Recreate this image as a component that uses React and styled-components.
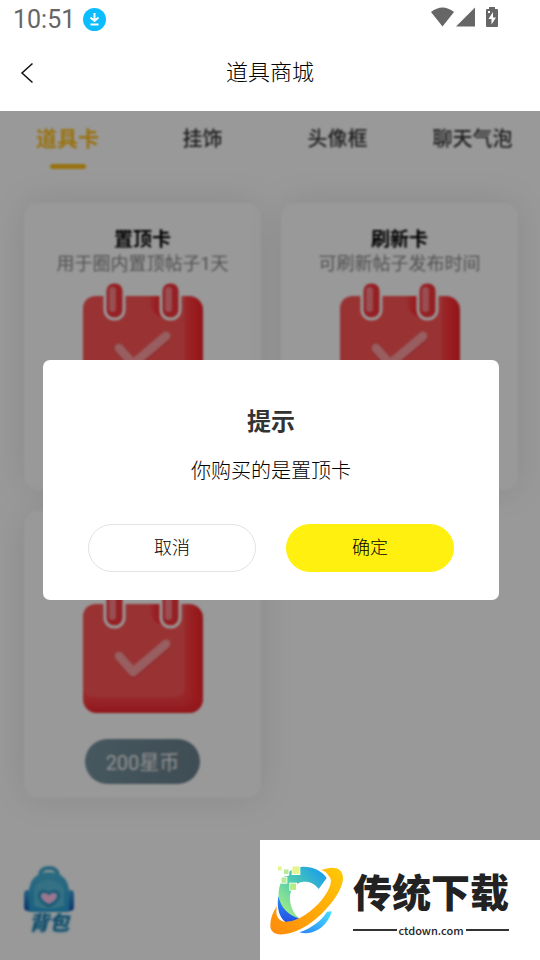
import React, { useState } from 'react';
import styled, { createGlobalStyle } from 'styled-components';

const tabs = ['道具卡', '挂饰', '头像框', '聊天气泡'];

const products = [
  { id: 1, name: '置顶卡', desc: '用于圈内置顶帖子1天' },
  { id: 2, name: '刷新卡', desc: '可刷新帖子发布时间' },
  { id: 3, price: '200星币' },
];

const CalendarIcon = () => (
  <svg width="120" height="123" viewBox="0 0 120 123" aria-hidden="true">
    <defs>
      <linearGradient id="calSide" x1="0" y1="0" x2="1" y2="0">
        <stop offset="0.82" stopColor="#ff4a4d" />
        <stop offset="0.93" stopColor="#ff2e33" />
        <stop offset="1" stopColor="#f0242c" />
      </linearGradient>
      <linearGradient id="calBottom" x1="0" y1="0" x2="0" y2="1">
        <stop offset="0.8" stopColor="#ff3338" stopOpacity="0" />
        <stop offset="1" stopColor="#f0242c" />
      </linearGradient>
      <linearGradient id="calShade" x1="0" y1="0" x2="1" y2="0">
        <stop offset="0" stopColor="#ff2e33" stopOpacity="0.1" />
        <stop offset="0.6" stopColor="#ff2e33" />
      </linearGradient>
    </defs>
    <rect y="13" width="120" height="109" rx="14" fill="url(#calSide)" />
    <rect y="13" width="120" height="109" rx="14" fill="url(#calBottom)" />
    <path d="M14 13H102V94Q102 106 90 106H12Q3 106 0 98V27Q0 13 14 13Z" fill="#ff5556" />
    <path d="M66 13H80V34Q66 32 66 13Z" fill="url(#calShade)" />
    {[23, 79].map((x) => (
      <g key={x}>
        <rect x={x - 1} y="-1" width="19" height="37" rx="9" fill="#ff3e42" stroke="#fff" strokeWidth="3" />
        <rect x={x + 1} y="1" width="15" height="32" rx="6" fill="#f8343b" />
        <rect x={x + 3} y="4" width="7" height="25" rx="3" fill="#ff8287" />
      </g>
    ))}
    <path d="M36 65L50 82L83 54" fill="none" stroke="#d93d40" strokeWidth="11" strokeLinecap="round" strokeLinejoin="round" opacity="0.4" />
    <path d="M36 65L50 81L83 53" fill="none" stroke="#ff9da0" strokeWidth="9" strokeLinecap="round" strokeLinejoin="round" />
  </svg>
);

const BackpackIcon = () => (
  <svg width="50" height="48" viewBox="0 0 50 48" aria-hidden="true">
    <defs>
      <linearGradient id="bag" x1="0" y1="0" x2="0" y2="1">
        <stop offset="0" stopColor="#4bb5d8" />
        <stop offset="1" stopColor="#2b9fd4" />
      </linearGradient>
      <linearGradient id="bagSide" x1="0" y1="0" x2="0" y2="1">
        <stop offset="0" stopColor="#3ca6d6" />
        <stop offset="1" stopColor="#1459b8" />
      </linearGradient>
    </defs>
    <rect x="0" y="24" width="11" height="21" rx="4" fill="url(#bagSide)" />
    <rect x="39" y="24" width="11" height="21" rx="4" fill="url(#bagSide)" />
    <path d="M16 9Q17 2 25 2T34 9" fill="none" stroke="#45acd2" strokeWidth="4" />
    <path d="M5 46V25Q6 7 25 6Q44 7 45 25V46Z" fill="url(#bag)" />
    <path d="M10 40V25Q11 15 25 14Q39 15 40 25V40Q25 46 10 40Z" fill="#58bcdc" />
    <path d="M25 42C5 31 16 19 25 26C34 19 45 31 25 42Z" fill="#2f9ac6" />
    <path d="M25 38C11 31 18 23 25 29C32 23 39 31 25 38Z" fill="#ffc6ee" />
  </svg>
);

const BrandMark = () => (
  <svg width="74" height="72" viewBox="30 70 222 216" aria-hidden="true">
    <defs>
      <linearGradient id="ring" x1="0" y1="1" x2="1" y2="0">
        <stop offset="0" stopColor="#ff8a0c" />
        <stop offset="1" stopColor="#ffc907" />
      </linearGradient>
      <linearGradient id="arc" x1="0" y1="1" x2="1" y2="0">
        <stop offset="0.1" stopColor="#a4ee84" />
        <stop offset="0.5" stopColor="#4ecbb0" />
        <stop offset="0.9" stopColor="#1c9fe8" />
      </linearGradient>
      <linearGradient id="deep" x1="0" y1="0" x2="0" y2="1">
        <stop offset="0" stopColor="#2a8ff0" />
        <stop offset="1" stopColor="#2450e6" />
      </linearGradient>
      <linearGradient id="low" x1="0" y1="1" x2="1" y2="0">
        <stop offset="0" stopColor="#2b83f5" />
        <stop offset="1" stopColor="#45e0ff" />
      </linearGradient>
    </defs>
    <path d="M55 166C50 200 56 227 76 244C92 245 106 240 118 233C92 221 68 200 55 166Z" fill="url(#deep)" />
    <path d="M122 79C155 76 185 90 200 112L176 145C165 128 145 120 125 124C100 130 88 152 90 178C92 202 103 222 118 233C88 226 60 200 56 166C54 122 82 84 122 79Z" fill="url(#arc)" />
    <path d="M215 212C205 252 165 288 118 275C155 262 185 240 201 213Z" fill="url(#low)" />
    <path d="M183 88C215 76 250 76 249 115C245 165 175 240 122 265C80 286 33 290 31 257C30 236 38 215 51 196C46 220 50 239 75 243C112 246 158 210 185 178C207 150 222 118 206 106C202 98 195 91 183 88Z" fill="url(#ring)" />
    <rect x="50" y="68" width="36" height="38" fill="#fff" />
    <g stroke="#fff" strokeWidth="6" paintOrder="stroke">
      <rect x="98" y="78" width="20" height="22" fill="#e4f58c" />
      <rect x="54" y="78" width="10" height="11" fill="#e4f58c" />
      <rect x="72" y="87" width="13" height="13" fill="#b6ec96" />
      <rect x="65" y="111" width="14" height="15" fill="#b6ec96" />
      <rect x="91" y="129" width="17" height="18" fill="#b6ec86" />
    </g>
    <g>
      <rect x="98" y="78" width="20" height="22" fill="#e4f58c" />
      <rect x="54" y="78" width="10" height="11" fill="#e4f58c" />
      <rect x="72" y="87" width="13" height="13" fill="#b6ec96" />
      <rect x="65" y="111" width="14" height="15" fill="#b6ec96" />
      <rect x="91" y="129" width="17" height="18" fill="#b6ec86" />
    </g>
  </svg>
);

const App = () => {
  const [active, setActive] = useState(0);
  const [open, setOpen] = useState(true);

  return (
    <Page>
      <GlobalStyle />
      <StatusBar>
        <Clock>
          10:51
          <svg width="23" height="23" viewBox="0 0 23 23" aria-hidden="true">
            <circle cx="11.5" cy="11.5" r="11.5" fill="#0bbcff" />
            <path d="M11.5 5V13M7.5 9.5L11.5 13L15.5 9.5M7.5 16.5H15.5" fill="none" stroke="#fff" strokeWidth="2" />
          </svg>
        </Clock>
        <svg width="67" height="20" viewBox="0 0 67 20" fill="#666" aria-hidden="true">
          <path d="M0 5Q11.500 -4 23 5L11.500 19.500Z" />
          <path d="M44 0.500V19.500H25Z" />
          <path fillRule="evenodd" d="M58 0H64V2H66Q67 2 67 3V19Q67 20 66 20H56Q55 20 55 19V3Q55 2 56 2H58ZM57 4V6H59V4ZM62 5L57.500 12H60.500V17.500L65 10.500H62Z" />
        </svg>
      </StatusBar>
      <NavBar>
        <BackButton aria-label="返回">
          <svg width="14" height="22" viewBox="0 0 14 22" fill="none" stroke="#111" strokeWidth="1.500" aria-hidden="true">
            <path d="M12.500 1.500L2 11L12.500 20.500" />
          </svg>
        </BackButton>
        <h1>道具商城</h1>
      </NavBar>

      <Content>
        <Shop>
          <Tabs>
            {tabs.map((tab, i) => (
              <Tab key={tab} $active={i === active} onClick={() => setActive(i)}>{tab}</Tab>
            ))}
          </Tabs>
          <Grid>
            {products.map((item) => (
              <Card key={item.id}>
                <CardTitle>{item.name}</CardTitle>
                <CardDesc>{item.desc}</CardDesc>
                <CalendarIcon />
                {item.price && <PriceButton onClick={() => setOpen(true)}>{item.price}</PriceButton>}
              </Card>
            ))}
          </Grid>
          <BagButton>
            <BackpackIcon />
            <span>背包</span>
          </BagButton>
        </Shop>
        {open && <Dim />}
      </Content>

      {open && (
        <DialogLayer>
          <Dialog role="dialog" aria-labelledby="dialog-title">
            <h2 id="dialog-title">提示</h2>
            <p>你购买的是置顶卡</p>
            <Actions>
              <DialogButton onClick={() => setOpen(false)}>取消</DialogButton>
              <DialogButton $primary onClick={() => setOpen(false)}>确定</DialogButton>
            </Actions>
          </Dialog>
        </DialogLayer>
      )}

      <Brand>
        <BrandMark />
        <BrandText>
          <strong>传统下载</strong>
          <small>ctdown.com</small>
        </BrandText>
      </Brand>
    </Page>
  );
};

const GlobalStyle = createGlobalStyle`
  * {
    box-sizing: border-box;
  }
  body {
    margin: 0;
    background: #fff;
    font-family: Roboto, "Noto Sans CJK SC", sans-serif;
  }
  h1, h2, p {
    margin: 0;
  }
  button {
    padding: 0;
    border: none;
    background: none;
    font-family: inherit;
    cursor: pointer;
  }
`;

const Page = styled.div`
  min-height: 100vh;
  display: flex;
  flex-direction: column;
`;

const StatusBar = styled.div`
  height: 34px;
  padding: 0 42px 0 13px;
  display: flex;
  align-items: center;
  justify-content: space-between;
`;

const Clock = styled.div`
  padding-top: 5px;
  display: flex;
  align-items: center;
  gap: 8px;
  color: #666;
  font-size: 25px;
  line-height: 30px;
`;

const NavBar = styled.header`
  height: 77px;
  padding: 0 20px;
  display: grid;
  grid-template-columns: 40px 1fr 40px;
  align-items: center;
  h1 {
    font-size: 22px;
    font-weight: 300;
    line-height: 32px;
    text-align: center;
    color: #000;
  }
`;

const BackButton = styled.button`
  height: 40px;
  display: flex;
  align-items: center;
`;

const Content = styled.main`
  position: relative;
  flex: 1;
  display: flex;
  flex-direction: column;
  overflow: hidden;
`;

const Shop = styled.div`
  flex: 1;
  display: flex;
  flex-direction: column;
  filter: blur(1px);
`;

const Tabs = styled.nav`
  display: grid;
  grid-template-columns: repeat(4, 1fr);
`;

const Tab = styled.button`
  height: 58px;
  padding-top: 13px;
  display: flex;
  flex-direction: column;
  align-items: center;
  justify-content: space-between;
  color: ${({ $active }) => ($active ? '#ffbe1a' : '#333')};
  font-size: ${({ $active }) => ($active ? '21px' : '20px')};
  font-weight: ${({ $active }) => ($active ? 700 : 500)};
  line-height: 30px;
  &::after {
    content: '';
    width: 36px;
    height: 5px;
    border-radius: 3px;
    background: ${({ $active }) => ($active ? '#ffbe1a' : 'transparent')};
  }
`;

const Grid = styled.section`
  padding: 34px 22px 0 24px;
  display: grid;
  grid-template-columns: 1fr 1fr;
  gap: 21px 20px;
`;

const Card = styled.article`
  min-height: 287px;
  padding: 25px 0 14px;
  display: flex;
  flex-direction: column;
  align-items: center;
  border-radius: 14px;
  background: #fff;
  box-shadow: 0 0 36px rgba(0, 0, 0, 0.1);
`;

const CardTitle = styled.h2`
  min-height: 24px;
  font-size: 19px;
  font-weight: 700;
  line-height: 24px;
  color: #000;
`;

const CardDesc = styled.p`
  min-height: 23px;
  margin-bottom: 8px;
  font-size: 18px;
  line-height: 23px;
  color: #888;
`;

const PriceButton = styled.button`
  height: 45px;
  margin-top: 25px;
  padding: 0 21px;
  border-radius: 23px;
  background: linear-gradient(100deg, #76939f, #697f8c);
  color: #eee;
  font-size: 20px;
`;

const BagButton = styled.button`
  margin: auto 0 24px 24px;
  align-self: flex-start;
  display: flex;
  flex-direction: column;
  align-items: center;
  span {
    margin-top: -4px;
    font-size: 20px;
    font-weight: 700;
    font-style: italic;
    line-height: 26px;
    color: #2580b0;
    text-shadow: 0 0 2px #8fd8f0, 0 0 3px #5cbfe4;
  }
`;

const Dim = styled.div`
  position: absolute;
  inset: 0;
  background: rgba(0, 0, 0, 0.4);
`;

const DialogLayer = styled.div`
  position: fixed;
  inset: 0;
  padding: 0 41px 0 43px;
  display: flex;
  align-items: center;
`;

const Dialog = styled.div`
  width: 100%;
  padding: 45px 45px 28px;
  border-radius: 7px;
  background: #fff;
  text-align: center;
  h2 {
    font-size: 24px;
    font-weight: 700;
    line-height: 34px;
    color: #333;
  }
  p {
    margin: 17px 0 38px;
    font-size: 20px;
    font-weight: 300;
    line-height: 30px;
    color: #000;
  }
`;

const Actions = styled.div`
  display: grid;
  grid-template-columns: 1fr 1fr;
  gap: 30px;
`;

const DialogButton = styled.button`
  height: 48px;
  padding-bottom: 5px;
  border: 1px solid ${({ $primary }) => ($primary ? '#fff00f' : '#e2e2e2')};
  border-radius: 24px;
  background: ${({ $primary }) => ($primary ? '#fff00f' : '#fff')};
  color: #000;
  font-size: 18px;
  font-weight: 300;
`;

const Brand = styled.aside`
  position: fixed;
  right: 0;
  bottom: 0;
  width: 280px;
  height: 120px;
  padding-left: 10px;
  display: flex;
  align-items: center;
  gap: 9px;
  background: #fff;
  color: #222;
`;

const BrandText = styled.div`
  padding-top: 6px;
  display: flex;
  flex-direction: column;
  strong {
    font-size: 39px;
    font-weight: 900;
    line-height: 50px;
  }
  small {
    margin-top: 4px;
    display: flex;
    align-items: center;
    gap: 2px;
    font-family: "Noto Sans CJK SC", sans-serif;
    font-size: 11px;
    font-weight: 500;
    line-height: 14px;
    &::before,
    &::after {
      content: '';
      flex: 1;
      height: 2px;
      background: #333;
    }
  }
`;

export default App;
